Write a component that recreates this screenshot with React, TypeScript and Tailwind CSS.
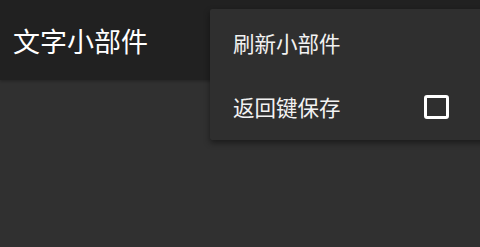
import React from "react";

export default function App() {
  return (
    <div
      className="relative w-[480px] h-[247px] overflow-hidden bg-[#303030]"
      style={{ fontFamily: '"Noto Sans CJK SC", "Noto Sans", sans-serif' }}
    >
      <div className="h-[80px] bg-[#212121] flex items-center pl-[13px] shadow-[0_1px_3px_rgba(0,0,0,0.3)]">
        <span className="text-[27px] leading-none text-white">文字小部件</span>
      </div>
      <div className="absolute left-[210px] top-[9px] w-[290px] h-[131px] bg-[#2f2f2f] shadow-[0_3px_6px_rgba(0,0,0,0.45)] rounded-[2px] flex flex-col">
        <div className="h-[65px] flex items-center pl-[23px] pt-[2px]">
          <span className="text-[21.5px] leading-none text-[#f2f2f2]">刷新小部件</span>
        </div>
        <div className="h-[66px] flex items-center pl-[23px] pr-[51px] justify-between">
          <span className="text-[21.5px] leading-none text-[#f2f2f2]">返回键保存</span>
          <div className="w-[25px] h-[24px] border-[3px] border-white rounded-[3px]" />
        </div>
      </div>
    </div>
  );
}
